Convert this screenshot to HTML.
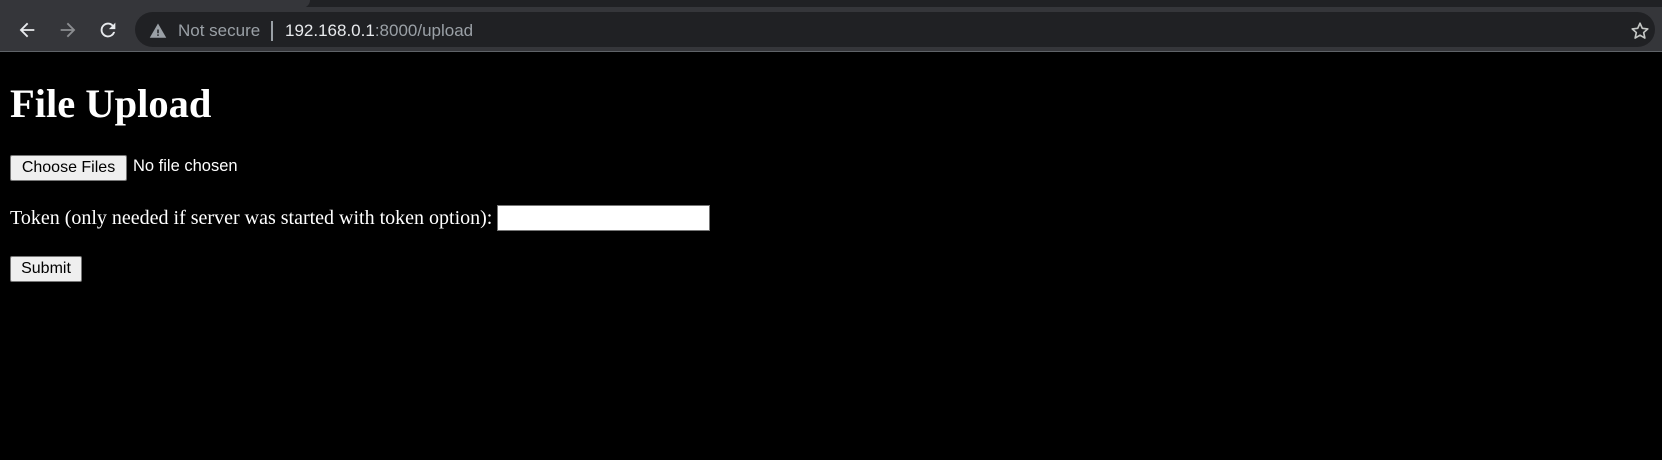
<!DOCTYPE html>
<html><head><meta charset="utf-8"><style>
*{margin:0;padding:0;box-sizing:border-box}
body{width:1662px;height:460px;background:#000;position:relative;overflow:hidden;font-family:"Liberation Serif",serif;color:#fff}
.tabs{position:absolute;left:0;top:0;width:1662px;height:8px;background:#202124}
.tabs .t{position:absolute;left:0;top:0;width:310px;height:8px;background:#35363a;border-radius:0 0 8px 0}
.bar{position:absolute;left:0;top:7px;width:1662px;height:45px;background:#35363a;border-bottom:1px solid #5f6368}
.omni{position:absolute;left:135px;top:5px;width:1520px;height:35px;border-radius:18px;background:#202124}
.ui{font-family:"Liberation Sans",sans-serif;position:absolute}
.ab{position:absolute}
.btn{font-family:"Liberation Sans",sans-serif;font-size:16px;color:#000;background:#efefef;border:1px solid #767676;border-radius:2px;position:absolute;text-align:center}
</style></head><body>
<div class="tabs"><div class="t"></div></div>
<div class="bar">
 <svg class="ab" style="left:16px;top:12px" width="22" height="22" viewBox="0 0 24 24"><path d="M20 11H7.8l5.6-5.6L12 4l-8 8 8 8 1.4-1.4L7.8 13H20z" fill="#e8eaed"/></svg>
 <svg class="ab" style="left:57px;top:12px" width="22" height="22" viewBox="0 0 24 24"><path d="M4 11h12.2l-5.6-5.6L12 4l8 8-8 8-1.4-1.4 5.6-5.6H4z" fill="#8b8d90"/></svg>
 <svg class="ab" style="left:97px;top:12px" width="22" height="22" viewBox="0 0 24 24"><path d="M17.65 6.35A7.96 7.96 0 0 0 12 4a8 8 0 1 0 7.73 10h-2.08A6 6 0 1 1 12 6c1.66 0 3.14.69 4.22 1.78L13 11h7V4z" fill="#e8eaed"/></svg>
 <div class="omni">
  <svg class="ab" style="left:14px;top:10px" width="18" height="18" viewBox="0 0 24 24"><path d="M1 21h22L12 2z" fill="#9aa0a6"/><path d="M11 10h2v5h-2zM11 16.5h2v2h-2z" fill="#202124"/></svg>
  <span class="ui" style="left:43px;top:9px;font-size:17px;color:#9aa0a6">Not secure</span>
  <div class="ab" style="left:136px;top:9px;width:1.5px;height:20px;background:#9aa0a6"></div>
  <span class="ui" style="left:150px;top:9px;font-size:17px;color:#e8eaed">192.168.0.1<span style="color:#9aa0a6">:8000/upload</span></span>
  <svg class="ab" style="left:1494px;top:8px" width="22" height="22" viewBox="0 0 24 24"><path d="M12 3.5l2.5 5.6 6 .6-4.5 4 1.3 6-5.3-3.1-5.3 3.1 1.3-6-4.5-4 6-.6z" fill="none" stroke="#c4c7c5" stroke-width="1.8" stroke-linejoin="round"/></svg>
 </div>
</div>
<div class="ab" style="left:10px;top:81px;font-size:40.5px;font-weight:bold;line-height:46px">File Upload</div>
<div class="btn" style="left:10px;top:155px;width:117px;height:26px;line-height:23px">Choose Files</div>
<span class="ui" style="left:133px;top:157px;font-size:16.5px;color:#fff">No file chosen</span>
<div class="ab" style="left:10px;top:206px;font-size:20px;line-height:24px">Token (only needed if server was started with token option):</div>
<div class="ab" style="left:497px;top:205px;width:213px;height:26px;background:#fff;border:1px solid #767676"></div>
<div class="btn" style="left:10px;top:256px;width:72px;height:26px;line-height:23px">Submit</div>
</body></html>
